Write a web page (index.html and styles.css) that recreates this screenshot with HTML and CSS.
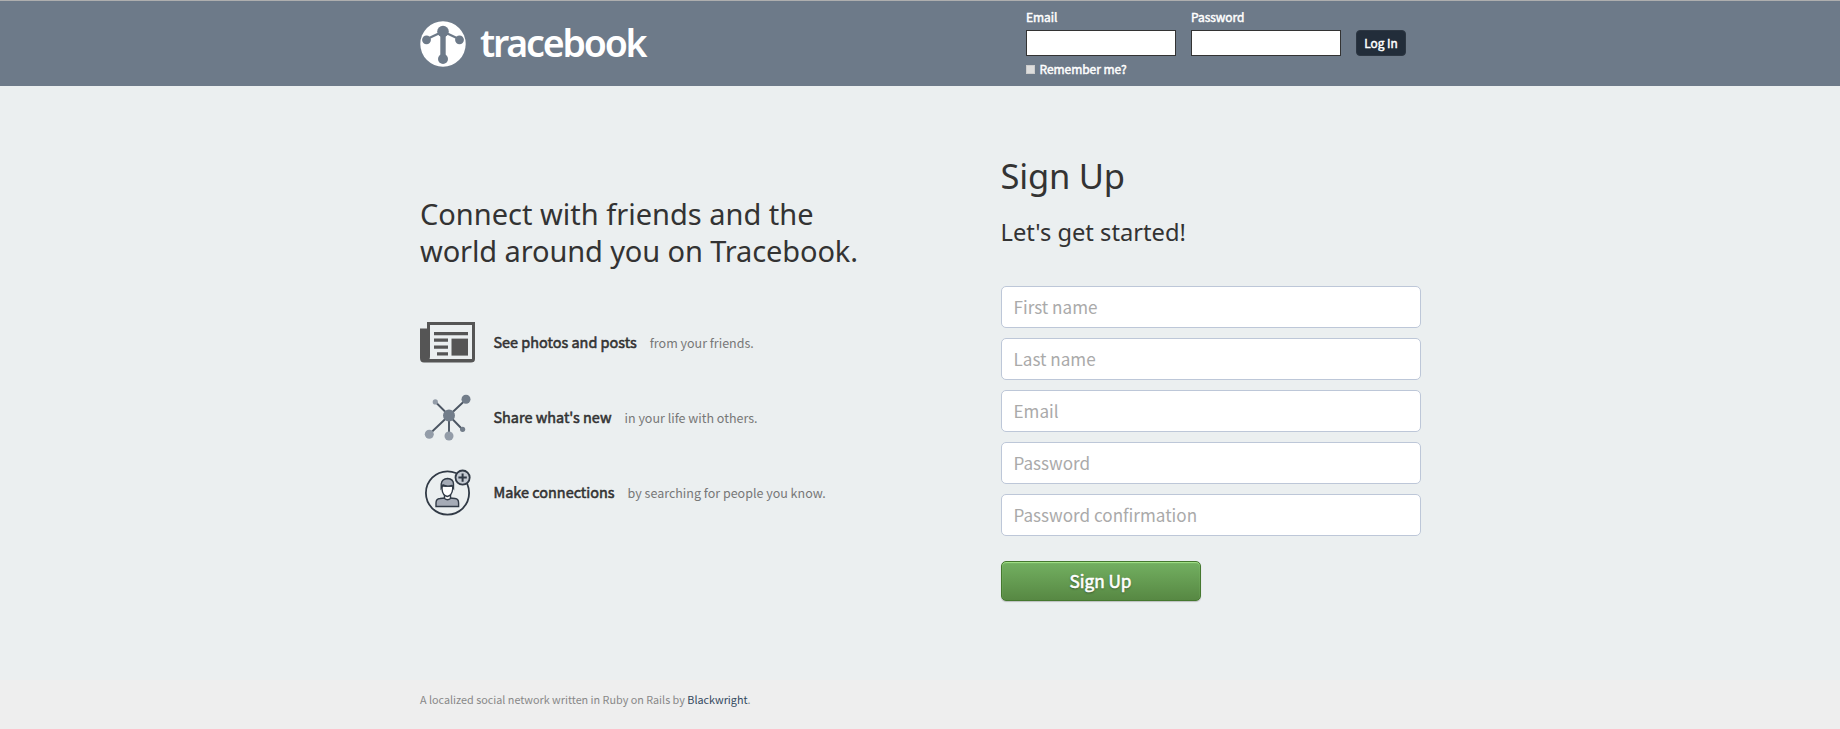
FILE: index.html
```html
<!DOCTYPE html>
<html lang="en">
<head>
<meta charset="utf-8">
<title>Tracebook</title>
<link rel="stylesheet" href="styles.css">
</head>
<body>
<header class="topbar">
  <div class="container topbar-inner">
    <a class="brand">
      <svg class="brand-mark" viewBox="0 0 46 46" width="46" height="46">
        <circle cx="23" cy="23" r="22.7" fill="#fff"/>
        <g fill="#6d7a89" stroke="#6d7a89">
          <path d="M6 18.5 23 10.500 40 18.500" fill="none" stroke-width="2.200"/>
          <path d="M23 10V38" stroke-width="5.400"/>
          <circle cx="23" cy="10.500" r="5.800" stroke="none"/>
          <circle cx="6.500" cy="18.800" r="4.400" stroke="none"/>
          <circle cx="39.500" cy="18.800" r="4.400" stroke="none"/>
          <circle cx="23" cy="38" r="5" stroke="none"/>
        </g>
      </svg>
      <span class="brand-name">tracebook</span>
    </a>
    <form class="login">
      <div class="login-field">
        <label for="login-email">Email</label>
        <input id="login-email" class="login-input" type="text">
        <div class="remember"><span class="checkbox"></span><span>Remember me?</span></div>
      </div>
      <div class="login-field">
        <label for="login-password">Password</label>
        <input id="login-password" class="login-input" type="password">
      </div>
      <button class="login-button" type="button">Log In</button>
    </form>
  </div>
</header>
<main class="container main">
  <section class="intro">
    <h2 class="intro-title"><span class="line-one">Connect with friends and the</span><br><span class="line-two">world around you on Tracebook.</span></h2>
    <ul class="features">
      <li class="feature">
        <svg class="feature-icon" viewBox="0 0 56 48" width="56" height="48">
          <path d="M7 4H55V41Q55 44.500 51 44.500H4Q0 44.500 0 40V10.500H7Z" fill="#555"/>
          <path d="M10 7H52V41H9.500Q10 40 10 38Z" fill="#ebeff0"/>
          <g fill="#555">
            <path d="M14 14h34v3.200H14zM14 20.600h14v3.200H14zM14 27.500h14v3.200H14zM17 34.300h11v3.200H17z"/>
            <path d="M31.500 20.600H48v17H31.500z"/>
          </g>
        </svg>
        <strong>See photos and posts</strong><span>from your friends.</span>
      </li>
      <li class="feature">
        <svg class="feature-icon" viewBox="0 0 56 48" width="56" height="48">
          <g stroke="#4c5663" stroke-width="1.900">
            <path d="M29 22.500 46 6.500M29 22.500 15.500 9M29 22.500 9 41.500M29 22.500V43M29 22.500 42.500 36.500"/>
          </g>
          <g fill="#727d8a">
            <circle cx="29" cy="22.500" r="6"/>
            <circle cx="46" cy="6.300" r="4.500"/>
            <circle cx="42.600" cy="36.300" r="2.600"/>
          </g>
          <g fill="#939ca8">
            <circle cx="15.300" cy="8.900" r="2.600"/>
            <circle cx="9.300" cy="41.300" r="4.500"/>
            <circle cx="29" cy="43" r="4.500"/>
          </g>
        </svg>
        <strong>Share what's new</strong><span>in your life with others.</span>
      </li>
      <li class="feature">
        <svg class="feature-icon" viewBox="0 0 56 48" width="56" height="48">
          <g stroke="#313a46" stroke-width="1.400">
            <circle cx="27.500" cy="25" r="21.600" fill="none" stroke-width="1.800"/>
            <path d="M16 38.500V35Q16 30.800 20 30.500L25 30H30L35 30.500Q38.600 30.800 38.600 35V38.500Z" fill="#a5abb6"/>
            <path d="M24.500 27V30.500Q27.500 33 30.500 30.500V27" fill="#fff"/>
            <path d="M22 18V21Q22.500 27.500 27.300 28.500 32 27.500 32.700 21V18Z" fill="#fff"/>
            <path d="M21.200 20V16Q22 10.800 27.500 10.500 33.500 11 33.500 16V20L32 17.500Q27 19 23 17Z" fill="#a5abb6"/>
            <circle cx="42.600" cy="9.600" r="7.100" fill="#c3c9d1" stroke-width="1.800"/>
            <path d="M42.600 5.400V13.800M38.400 9.600H46.800" stroke-width="2"/>
          </g>
        </svg>
        <strong>Make connections</strong><span>by searching for people you know.</span>
      </li>
    </ul>
  </section>
  <section class="signup">
    <h1 class="signup-title">Sign Up</h1>
    <h3 class="signup-subtitle">Let's get started!</h3>
    <form class="signup-form">
      <input type="text" placeholder="First name">
      <input type="text" placeholder="Last name">
      <input type="text" placeholder="Email">
      <input type="password" placeholder="Password">
      <input type="password" placeholder="Password confirmation">
      <button class="signup-button" type="button">Sign Up</button>
    </form>
  </section>
</main>
<footer class="footer">
  <div class="container">A localized social network written in Ruby on Rails by <a class="author">Blackwright</a>.</div>
</footer>
</body>
</html>
```

FILE: styles.css
```css
* { box-sizing: border-box; }
body {
  margin: 0;
  height: 729px;
  overflow: hidden;
  display: flex;
  flex-direction: column;
  background: #ebeff0;
  color: #333;
  font-family: "Noto Sans CJK SC", "Noto Sans", sans-serif;
}
h1, h2, h3, ul { margin: 0; padding: 0; font-weight: 400; }
input, button { font-family: inherit; }
.container { width: 1000px; margin: 0 auto; }

.topbar {
  height: 86px;
  background: #6d7a89;
  border-top: 1px solid #aeaeae;
  color: #fff;
}
.topbar-inner { display: flex; justify-content: space-between; }
.brand { display: flex; margin-top: 18px; height: 48px; }
.brand-mark { margin-top: 1.500px; }
.brand-name {
  margin-left: 14px;
  font: 600 37.500px/48px "Noto Sans", sans-serif;
  letter-spacing: -2.200px;
}
.login {
  display: flex;
  align-items: flex-start;
  gap: 15px;
  margin-right: 14px;
  padding-top: 6px;
  font-size: 12px;
  letter-spacing: -.05px;
  -webkit-text-stroke: .45px currentColor;
}
.login-field { width: 150px; }
.login-field label { display: block; height: 23px; line-height: 20px; }
.login-input {
  display: block;
  width: 150px;
  height: 26px;
  padding: 2px 6px;
  background: #fff;
  border: 1px solid #333;
}
.remember { display: flex; align-items: center; gap: 4.500px; margin-top: 3px; line-height: 20px; white-space: nowrap; }
.checkbox { width: 9px; height: 9px; background: #ddd; border: 1px solid #ccc; }
.login-button {
  width: 50px;
  height: 26px;
  margin-top: 23px;
  padding: 0;
  border: 1px solid #2c3642;
  border-radius: 4px;
  background: #222d3a;
  color: #fff;
  font-size: 11.900px;
  -webkit-text-stroke: .45px currentColor;
  line-height: 22px;
}

.main { flex: 1; display: flex; }
.intro { flex: none; width: 580.500px; padding-top: 109px; }
.intro-title { font: 400 29px/37px "Noto Sans", sans-serif; white-space: nowrap; }
.line-two { letter-spacing: -.110px; }
.features { list-style: none; margin-top: 49px; display: flex; flex-direction: column; gap: 27px; }
.feature { display: flex; align-items: center; height: 48px; font-size: 12.500px; color: #777; white-space: nowrap; }
.feature-icon { flex: none; margin-right: 17.500px; }
.feature strong { margin-right: 13px; font-size: 14.450px; font-weight: 400; -webkit-text-stroke: .55px currentColor; color: #333; line-height: 24px; }
.feature span { padding-top: 1px; line-height: 24px; }

.signup { flex: none; width: 421px; padding-top: 66px; }
.signup-title { font: 400 34.500px/48px "Noto Sans", sans-serif; letter-spacing: -.2px; }
.signup-subtitle { margin-top: 16px; font: 400 23.700px/32px "Noto Sans", sans-serif; }
.signup-form { margin-top: 38px; display: flex; flex-direction: column; gap: 10px; }
.signup-form input {
  width: 420px;
  height: 42px;
  padding: 0 12px 1px;
  border: 1px solid #bdc7d8;
  border-radius: 5px;
  background: #fff;
  font-size: 17.100px;
}
.signup-form input::placeholder { color: #aaa; opacity: 1; }
.signup-button {
  width: 200px;
  height: 40px;
  margin-top: 15px;
  padding: 0;
  border: 1px solid #45782f;
  border-radius: 5px;
  background: linear-gradient(#73b061, #578843);
  box-shadow: inset 0 1px 1px #a4e388, 0 1px 1px rgba(0, 0, 0, .2);
  color: #fff;
  font-size: 17.200px;
  -webkit-text-stroke: .6px currentColor;
  line-height: 36px;
  text-shadow: 0 1px 2px rgba(0, 0, 0, .5);
}

.footer { height: 49px; background: #eee; color: #888; font-size: 10.800px; line-height: 38px; }
.author { color: #34495e; }
```
